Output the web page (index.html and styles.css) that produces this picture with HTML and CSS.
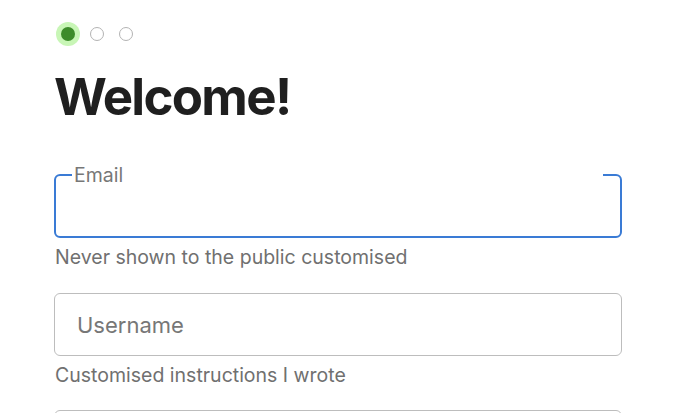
FILE: index.html
```html
<!DOCTYPE html>
<html lang="en">

<head>
    <meta charset="UTF-8">
    <meta name="viewport" content="width=device-width, initial-scale=1.0">
    <title>Welcome</title>
    <link rel="stylesheet" href="styles.css">
</head>

<body>
    <main class="signup">
        <div class="steps">
            <span class="step active"></span>
            <span class="step"></span>
            <span class="step"></span>
        </div>

        <h1>Welcome!</h1>

        <div class="field field-email">
            <fieldset class="box focused">
                <legend>Email</legend>
                <input type="email" id="email" name="email">
            </fieldset>
            <p class="hint">Never shown to the public customised</p>
        </div>

        <div class="field">
            <div class="box">
                <input type="text" id="username" name="username" placeholder="Username">
            </div>
            <p class="hint">Customised instructions I wrote</p>
        </div>

        <div class="field field-last">
            <div class="box"></div>
        </div>
    </main>
</body>

</html>
```

FILE: styles.css
```css
body {
    font-family: Inter, "Noto Sans", sans-serif;
    background-color: #fff;
    color: #1f1f1f;
    margin: 0;
    padding: 0;
}

.signup {
    width: 568px;
    padding: 22px 0 0 54px;
}

/* Step dots */
.steps {
    display: flex;
    align-items: center;
    gap: 15px;
    height: 24px;
}

.step {
    width: 12px;
    height: 12px;
    border: 1px solid #b3b3b3;
    border-radius: 50%;
    box-sizing: content-box;
}

.step.active {
    width: 14px;
    height: 14px;
    border: none;
    margin-left: 7px;
    background-color: #3d8c2a;
    box-shadow: 0 0 0 5px #c8f6b6;
}

h1 {
    font-size: 51px;
    font-weight: 700;
    letter-spacing: -1.7px;
    margin: 21px 0 0;
    line-height: 60px;
}

/* Form fields */
.field {
    margin-top: 24px;
}

.field-email {
    margin-top: 38px;
}

.field-last {
    margin-top: 23px;
}

.box {
    border: 1px solid #bdbdbd;
    border-radius: 6px;
    margin: 0;
    padding: 0;
    box-sizing: border-box;
    height: 63px;
    min-width: 0;
}

.box.focused {
    border: 2px solid #3a7bd5;
    height: 73px;
    padding: 0 16px;
}

.box legend {
    font-size: 19.5px;
    line-height: 20px;
    color: #777;
    padding: 0 2px;
    margin: 0;
    width: calc(100% - 5px);
}

.box input {
    width: 100%;
    height: 100%;
    border: none;
    outline: none;
    background: transparent;
    font-family: inherit;
    font-size: 22px;
    padding: 0 22px;
    box-sizing: border-box;
    color: #1f1f1f;
}

.box.focused input {
    padding: 0 2px;
    height: 44px;
}

.box input::placeholder {
    color: #777;
}

.hint {
    font-size: 19.5px;
    color: #707070;
    margin: 7px 0 0 1px;
    line-height: 24px;
}
```
